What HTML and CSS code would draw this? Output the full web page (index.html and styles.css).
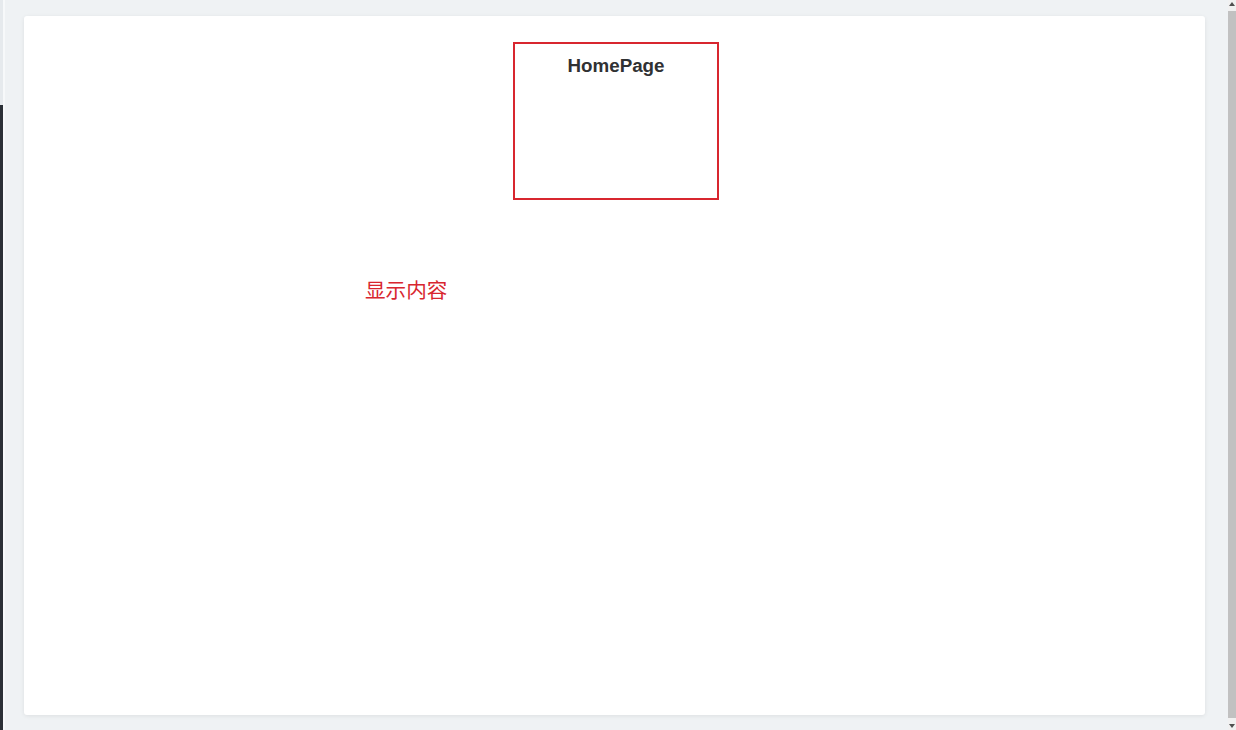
FILE: index.html
```html
<!DOCTYPE html>
<html lang="zh-CN">
<head>
<meta charset="utf-8">
<title>HomePage</title>
<link rel="stylesheet" href="styles.css">
</head>
<body>
<div class="app">
  <div class="side-edge">
    <div class="side-edge-top"></div>
    <div class="side-edge-rest"></div>
  </div>
  <main class="main">
    <section class="card">
      <div class="home-box">
        <h3 class="home-title">HomePage</h3>
      </div>
      <div class="content-row">
        <span class="content-text">显示内容</span>
      </div>
    </section>
  </main>
  <div class="scrollbar">
    <div class="sb-arrow sb-up"></div>
    <div class="sb-track"><div class="sb-thumb"></div></div>
    <div class="sb-arrow sb-down"></div>
  </div>
</div>
</body>
</html>
```
FILE: styles.css
```css
html, body {
  margin: 0;
  padding: 0;
  height: 100%;
}
body {
  font-family: "Liberation Sans", Arial, "Noto Sans CJK SC", sans-serif;
  background: #eff2f4;
  overflow: hidden;
}
.app {
  display: flex;
  height: 730px;
  width: 1236px;
}
.side-edge {
  width: 3px;
  display: flex;
  flex-direction: column;
}
.side-edge-top {
  height: 105px;
  background: #e6eaed;
}
.side-edge-rest {
  flex: 1;
  background: #2b3036;
}
.main {
  flex: 1;
  padding: 16px 23px 15px 19px;
  background: #eff2f4;
  display: flex;
  border-left: 2px solid #f7f9fa;
}
.card {
  flex: 1;
  background: #ffffff;
  border-radius: 3px;
  box-shadow: 0 1px 4px rgba(0, 0, 0, 0.08);
  display: flex;
  flex-direction: column;
  align-items: center;
  padding-top: 26px;
}
.home-box {
  width: 202px;
  height: 154px;
  border: 2px solid #d8262f;
  margin-left: 3px;
  box-sizing: content-box;
}
.home-title {
  margin: 11px 0 0;
  text-align: center;
  font-size: 18.8px;
  font-weight: bold;
  color: #303133;
  line-height: 22px;
}
.content-row {
  align-self: stretch;
  padding-left: 341px;
  margin-top: 76px;
}
.content-text {
  font-family: "Noto Sans CJK SC", "Liberation Sans", sans-serif;
  font-size: 20.6px;
  line-height: 26px;
  color: #d8262f;
}
.scrollbar {
  width: 8px;
  background: #f1f1f1;
  display: flex;
  flex-direction: column;
}
.sb-arrow {
  height: 8px;
  display: flex;
  justify-content: center;
  align-items: center;
}
.sb-up::before {
  content: "";
  border-left: 3px solid transparent;
  border-right: 3px solid transparent;
  border-bottom: 4px solid #505050;
}
.sb-down::before {
  content: "";
  border-left: 3px solid transparent;
  border-right: 3px solid transparent;
  border-top: 4px solid #505050;
}
.sb-track {
  flex: 1;
  padding: 3px 0 4px;
  display: flex;
}
.sb-thumb {
  flex: 1;
  background: #c1c1c1;
}
```
